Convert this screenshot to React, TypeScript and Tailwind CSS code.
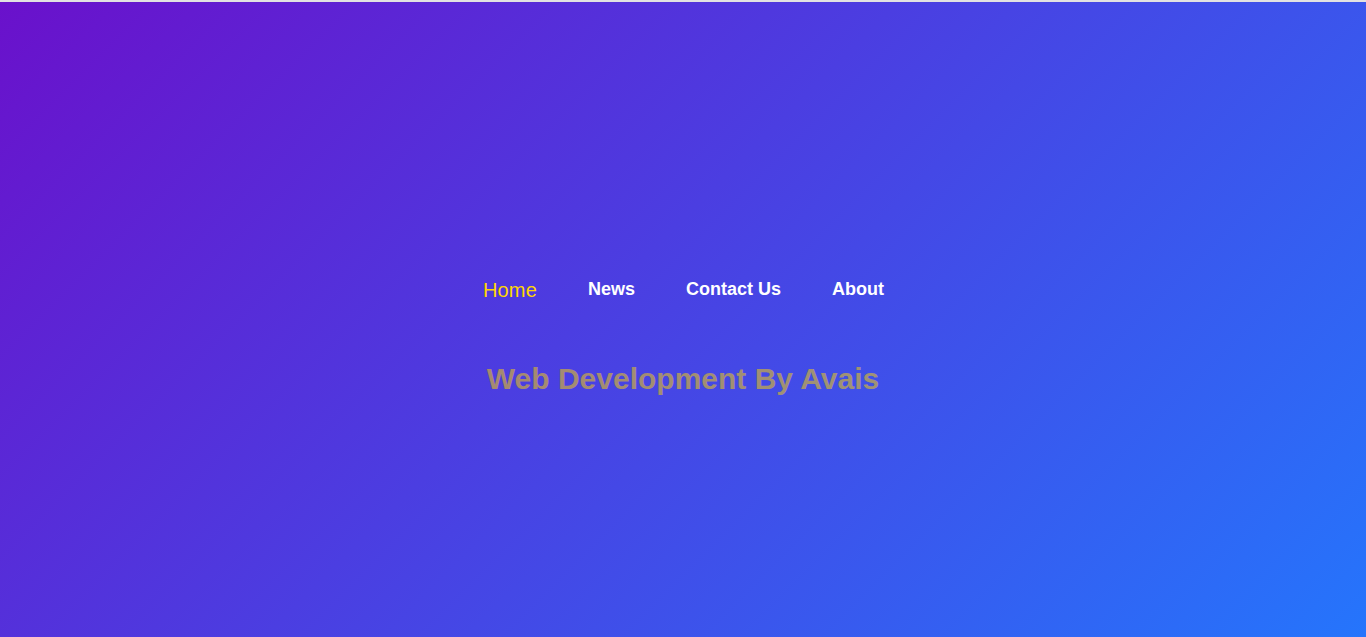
export default function App() {
  const items = ["News", "Contact Us", "About"];
  return (
    <div className="w-full h-[637px] flex flex-col overflow-hidden" style={{ fontFamily: '"Liberation Sans", Arial, sans-serif' }}>
      <div className="h-[2px] bg-[#e2e2e2] shrink-0" />
      <div className="flex-1 bg-[linear-gradient(135deg,#6a11cb,#2575fc)] flex flex-col items-center pt-[277px]">
        <nav className="flex gap-[51px] pl-[1px]">
          <a className="text-[20px] leading-[23px] text-[#ffd700] font-normal tracking-[0.2px] cursor-pointer">Home</a>
          {items.map((t) => (
            <a key={t} className="text-[18px] leading-[21px] text-white font-bold cursor-pointer">
              {t}
            </a>
          ))}
        </nav>
        <h1 className="mt-[60px] text-[30px] leading-[34px] font-bold text-[#ffd700]/50">
          Web Development By Avais
        </h1>
      </div>
    </div>
  );
}
